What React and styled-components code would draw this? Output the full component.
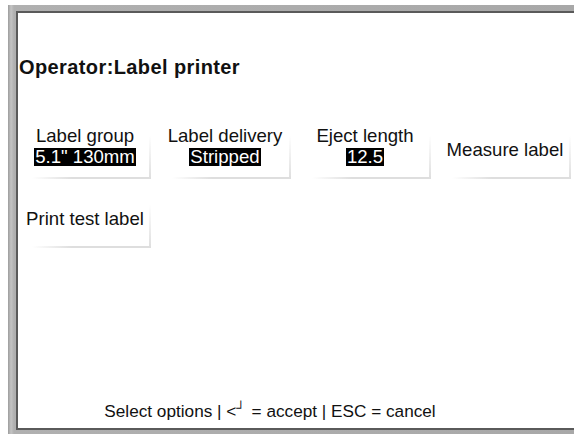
import React from 'react'
import styled, { createGlobalStyle } from 'styled-components'

const GlobalStyle = createGlobalStyle`
  html, body {
    margin: 0;
    padding: 0;
    background: #ffffff;
    overflow: hidden;
  }
  body {
    font-family: "Liberation Sans", Arial, sans-serif;
  }
`

const Frame = styled.div`
  box-sizing: border-box;
  margin: 5px 0 0 8px;
  height: 429px;
  padding: 6px 0 4px 8px;
  background: linear-gradient(to right, #9c9c9c, #c4c4c4 3px, #b0b0b0 6px, #a8a8a8);
`

const Panel = styled.div`
  box-sizing: border-box;
  height: 100%;
  background: #ffffff;
  border-top: 2px solid #5a5a5a;
  border-left: 2px solid #5a5a5a;
  border-bottom: 2px solid #5a5a5a;
  display: flex;
  flex-direction: column;
`

const Title = styled.h1`
  margin: 44px 0 0 1px;
  font-size: 20px;
  line-height: 20px;
  font-weight: bold;
  color: #111;
  letter-spacing: 0.4px;
`

const Grid = styled.div`
  margin-top: 44px;
  display: grid;
  grid-template-columns: repeat(4, 132px);
  grid-auto-rows: 58px;
  column-gap: 8px;
  row-gap: 11px;
  padding-left: 1px;
`

const Option = styled.div`
  box-sizing: border-box;
  display: flex;
  flex-direction: column;
  align-items: center;
  justify-content: center;
  padding-bottom: ${(p) => (p.$stacked ? '8px' : '0')};
  background:
    linear-gradient(to bottom, rgba(225,225,225,0) 25%, #dedede) right top / 2px 100% no-repeat,
    linear-gradient(to right, rgba(225,225,225,0) 10%, #dedede 40%) left bottom / 100% 2px no-repeat;
  color: #111;
  font-size: 18.6px;
  line-height: 20px;
  white-space: nowrap;
`

const Value = styled.span`
  margin-top: 2px;
  background: #000;
  color: #fff;
  padding: 0 1px;
  line-height: 18px;
`

const Footer = styled.div`
  margin-top: auto;
  padding-bottom: 7px;
  text-align: center;
  font-size: 17.2px;
  line-height: 20px;
  color: #111;
  padding-right: 52px;
`

const Enter = styled.span`
  font-size: 13px;
  vertical-align: 5px;
  margin-right: 6px;
`

const options = [
  { label: 'Label group', value: '5.1" 130mm' },
  { label: 'Label delivery', value: 'Stripped' },
  { label: 'Eject length', value: '12.5' },
  { label: 'Measure label' },
  { label: 'Print test label' },
]

export default function App() {
  return (
    <>
      <GlobalStyle />
      <Frame>
        <Panel>
          <Title>Operator:Label printer</Title>
          <Grid>
            {options.map((o) => (
              <Option key={o.label} $stacked={!!o.value}>
                <span>{o.label}</span>
                {o.value && <Value>{o.value}</Value>}
              </Option>
            ))}
          </Grid>
          <Footer>
            Select options | &lt;<Enter>┘</Enter>= accept | ESC = cancel
          </Footer>
        </Panel>
      </Frame>
    </>
  )
}
